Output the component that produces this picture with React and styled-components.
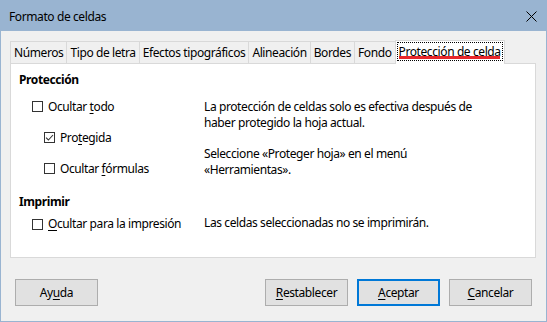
import styled, { createGlobalStyle } from "styled-components";

const GlobalStyle = createGlobalStyle`
  html, body {
    margin: 0;
    padding: 0;
    background: #ffffff;
  }
  body {
    font-family: "Noto Sans", "Open Sans", sans-serif;
    font-size: 12px;
    letter-spacing: -0.4px;
    color: #000000;
  }
  * {
    box-sizing: border-box;
  }
`;

const Window = styled.div`
  width: 547px;
  height: 322px;
  border: 1px solid #99b4d1;
  background: #f0f0f0;
  display: flex;
  flex-direction: column;
`;

const TitleBar = styled.div`
  height: 30px;
  flex: none;
  background: #99b4d1;
  display: flex;
  align-items: center;
  justify-content: space-between;
  padding-left: 8px;
`;

const Title = styled.span`
  line-height: 16px;
  margin-top: 1px;
`;

const CloseButton = styled.div`
  width: 30px;
  height: 30px;
  display: flex;
  align-items: center;
  justify-content: center;
`;

const Body = styled.div`
  flex: 1;
  display: flex;
  flex-direction: column;
  padding: 9px 10px 0 9px;
`;

const TabStrip = styled.div`
  height: 24px;
  display: flex;
  align-items: flex-end;
  margin-bottom: -1px;
  position: relative;
  z-index: 1;
`;

const Tab = styled.div`
  height: 22px;
  margin-bottom: 1px;
  margin-right: -1px;
  padding: 0 3px;
  border: 1px solid #d9d9d9;
  border-bottom: none;
  background: #f0f0f0;
  display: flex;
  align-items: center;
  white-space: nowrap;
`;

const ActiveTab = styled.div`
  position: relative;
  height: 24px;
  padding: 1px 1px 3px;
  border: 1px solid #d9d9d9;
  border-bottom: none;
  background: #ffffff;
  display: flex;
  white-space: nowrap;
`;

const FocusRing = styled.div`
  display: flex;
  align-items: center;
  padding: 0 1px;
  border: 1px dotted #000000;
`;

const Marker = styled.div`
  position: absolute;
  left: 3px;
  right: 4px;
  bottom: 5px;
  height: 3px;
  background: #e8262b;
`;

const Panel = styled.div`
  height: 195px;
  flex: none;
  background: #ffffff;
  border: 1px solid #d9d9d9;
  padding: 8px 8px 0;
`;

const Section = styled.div`
  display: grid;
  grid-template-columns: 185px 1fr;
  margin-top: ${(p) => p.$top || 0}px;
`;

const Heading = styled.div`
  grid-column: 1 / -1;
  font-weight: bold;
  line-height: 16px;
  margin-bottom: ${(p) => p.$gap || 0}px;
`;

const Options = styled.div`
  display: flex;
  flex-direction: column;
`;

const Row = styled.div`
  height: ${(p) => p.$h || 31}px;
  display: flex;
  align-items: center;
  gap: 5px;
  padding-left: ${(p) => p.$indent}px;
  line-height: 16px;
`;

const Box = styled.span`
  width: 11px;
  height: 11px;
  flex: none;
  border: 1px solid #333333;
  background: #ffffff;
  display: flex;
  align-items: center;
  justify-content: center;
`;

const Notes = styled.div`
  display: flex;
  flex-direction: column;
`;

const Note = styled.p`
  margin: ${(p) => p.$top}px 0 0;
  line-height: 16px;
`;

const Mn = styled.span`
  text-decoration: underline;
  text-decoration-thickness: 1px;
  text-underline-offset: 2px;
`;

const Footer = styled.div`
  margin-top: 21px;
  display: flex;
  gap: 9px;
  padding: 0 4px 0 5px;
`;

const Spacer = styled.div`
  flex: 1;
`;

const Button = styled.div`
  width: 83px;
  height: 27px;
  display: flex;
  align-items: center;
  justify-content: center;
  background: #e1e1e1;
  border: ${(p) => (p.$default ? "2px solid #0078d7" : "1px solid #adadad")};
`;

function Check({ checked, children, indent, h }) {
  return (
    <Row $indent={indent} $h={h}>
      <Box>
        {checked && (
          <svg width="9" height="9" viewBox="0 0 9 9">
            <path d="M1 4.6 L3.4 7 L8 2" fill="none" stroke="#333" strokeWidth="1.1" />
          </svg>
        )}
      </Box>
      <span>{children}</span>
    </Row>
  );
}

const tabs = ["Números", "Tipo de letra", "Efectos tipográficos", "Alineación", "Bordes", "Fondo"];

export default function App() {
  return (
    <>
      <GlobalStyle />
      <Window>
        <TitleBar>
          <Title>Formato de celdas</Title>
          <CloseButton>
            <svg width="11" height="11" viewBox="0 0 11 11">
              <path d="M0.5 0.5 L10.5 10.5 M10.5 0.5 L0.5 10.5" stroke="#000" strokeWidth="1" />
            </svg>
          </CloseButton>
        </TitleBar>
        <Body>
          <TabStrip>
            {tabs.map((t) => (
              <Tab key={t}>{t}</Tab>
            ))}
            <ActiveTab>
              <FocusRing>Protección de celda</FocusRing>
              <Marker />
            </ActiveTab>
          </TabStrip>
          <Panel>
            <Section>
              <Heading $gap={3}>Protección</Heading>
              <Options>
                <Check indent={13}>
                  Ocultar <Mn>t</Mn>odo
                </Check>
                <Check indent={25} checked>
                  Pro<Mn>t</Mn>egida
                </Check>
                <Check indent={25}>
                  Ocultar <Mn>f</Mn>órmulas
                </Check>
              </Options>
              <Notes>
                <Note $top={8}>
                  La protección de celdas solo es efectiva después de
                  <br />
                  haber protegido la hoja actual.
                </Note>
                <Note $top={15}>
                  Seleccione «Proteger hoja» en el menú
                  <br />
                  «Herramientas».
                </Note>
              </Notes>
            </Section>
            <Section $top={10}>
              <Heading>Imprimir</Heading>
              <Options>
                <Check indent={13} h={28}>
                  <Mn>O</Mn>cultar para la impresión
                </Check>
              </Options>
              <Notes>
                <Note $top={5}>Las celdas seleccionadas no se imprimirán.</Note>
              </Notes>
            </Section>
          </Panel>
          <Footer>
            <Button>
              <span>
                Ay<Mn>u</Mn>da
              </span>
            </Button>
            <Spacer />
            <Button>
              <span>
                <Mn>R</Mn>establecer
              </span>
            </Button>
            <Button $default>
              <span>
                <Mn>A</Mn>ceptar
              </span>
            </Button>
            <Button>
              <span>
                <Mn>C</Mn>ancelar
              </span>
            </Button>
          </Footer>
        </Body>
      </Window>
    </>
  );
}
